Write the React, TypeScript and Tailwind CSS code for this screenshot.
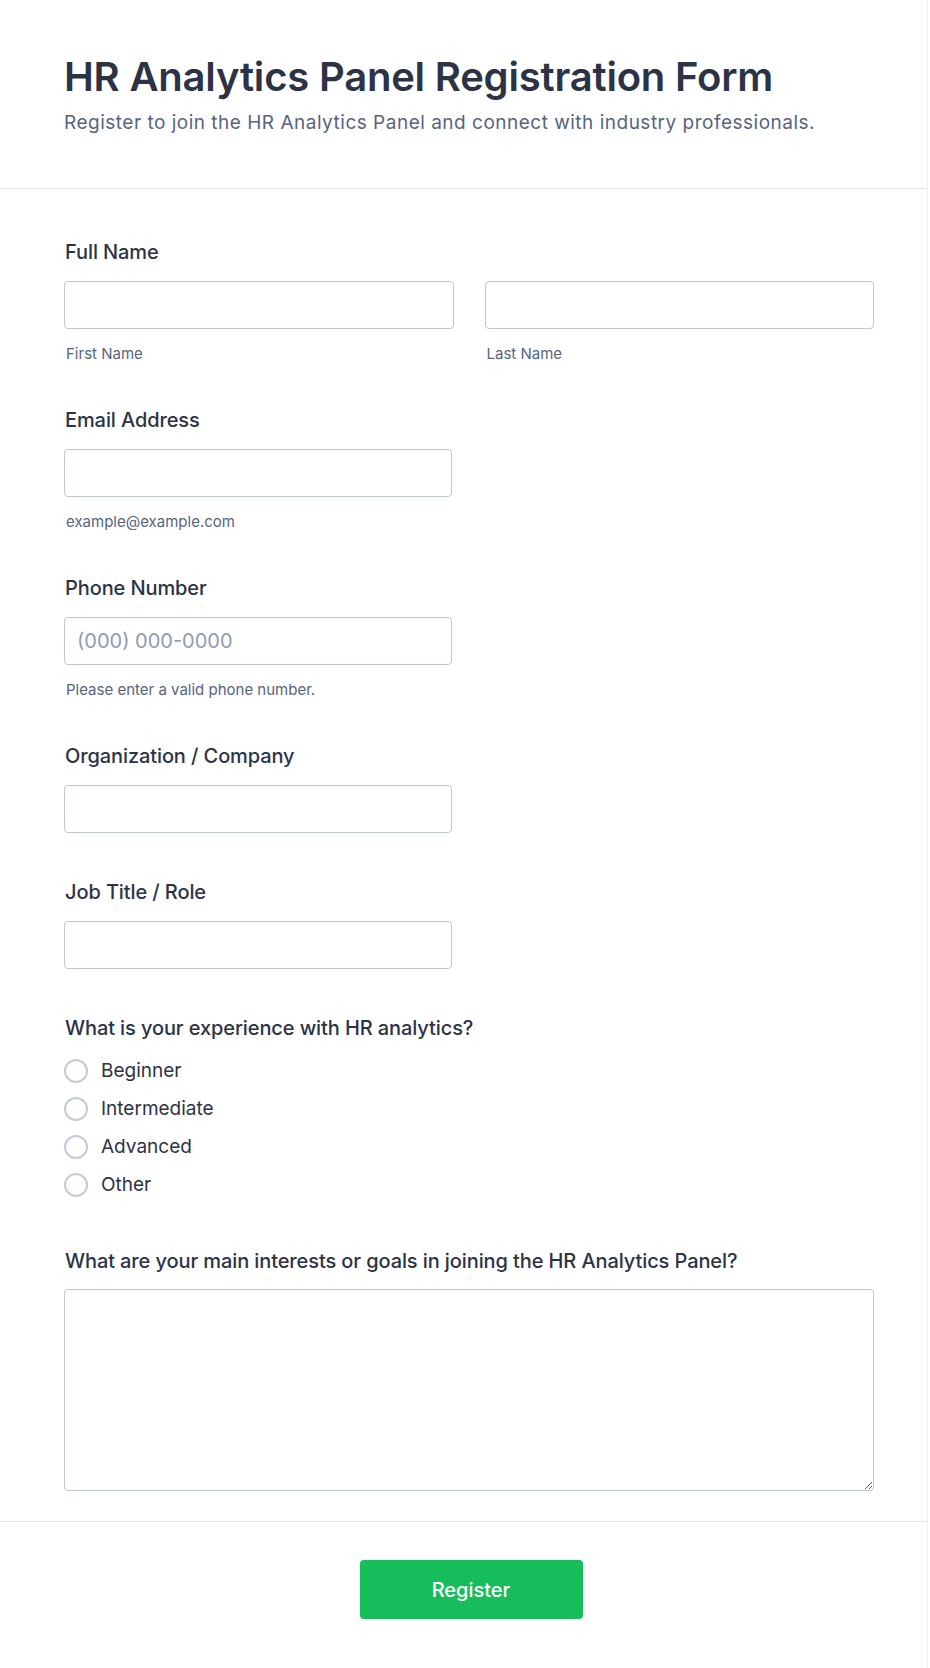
import React from "react";

function Label({ children }: { children: React.ReactNode }) {
  return (
    <div className="pt-[1px] mb-[-1px] text-[20px] leading-[24px] font-medium tracking-[-0.1px] text-[#2c3345] pl-[1px]">
      {children}
    </div>
  );
}

function Sub({ children }: { children: React.ReactNode }) {
  return <div className="mt-[15px] text-[15px] leading-[20px] text-[#57647e] pl-[2px]">{children}</div>;
}

function Input({ placeholder, wide }: { placeholder?: string; wide?: boolean }) {
  return (
    <input
      type="text"
      placeholder={placeholder}
      className={
        "block h-[48px] rounded-[4px] border border-[#bfc5d2] bg-white px-3 text-[20px] text-[#2c3345] placeholder:text-[#8f9bb3] outline-none " +
        (wide ? "w-full" : "w-[388px]")
      }
    />
  );
}

export default function App() {
  const options = ["Beginner", "Intermediate", "Advanced", "Other"];
  return (
    <div className="min-h-[1668px] w-[928px] border-r border-[#eef0f6] bg-white font-['Inter',sans-serif]">
      <header className="border-b border-[#dcdfea] pl-[64px] pr-[55px] pt-[53px] pb-[53px]">
        <h1 className="text-[40px] leading-[48px] font-semibold tracking-[-0.2px] text-[#2c3345]">
          HR Analytics Panel Registration Form
        </h1>
        <p className="mt-[10px] text-[19px] leading-[24px] tracking-[0.5px] text-[#57647e]">
          Register to join the HR Analytics Panel and connect with industry professionals.
        </p>
      </header>

      <form className="border-b border-[#e3e5ef] pl-[64px] pr-[53px] pt-[50px] pb-[30px]">
        <div>
          <Label>Full Name</Label>
          <div className="mt-[18px] grid grid-cols-2 gap-[31px]">
            <div>
              <Input wide />
              <Sub>First Name</Sub>
            </div>
            <div>
              <Input wide />
              <Sub>Last Name</Sub>
            </div>
          </div>
        </div>

        <div className="mt-[43px]">
          <Label>Email Address</Label>
          <div className="mt-[18px]">
            <Input />
          </div>
          <Sub>example@example.com</Sub>
        </div>

        <div className="mt-[43px]">
          <Label>Phone Number</Label>
          <div className="mt-[18px]">
            <Input placeholder="(000) 000-0000" />
          </div>
          <Sub>Please enter a valid phone number.</Sub>
        </div>

        <div className="mt-[43px]">
          <Label>Organization / Company</Label>
          <div className="mt-[18px]">
            <Input />
          </div>
        </div>

        <div className="mt-[46px]">
          <Label>Job Title / Role</Label>
          <div className="mt-[18px]">
            <Input />
          </div>
        </div>

        <div className="mt-[46px]">
          <Label>What is your experience with HR analytics?</Label>
          <div className="mt-[20px] flex flex-col gap-[14px]">
            {options.map((o) => (
              <label key={o} className="flex h-[24px] items-center gap-[13px]">
                <span className="block h-[24px] w-[24px] rounded-full border-2 border-[#c3cad8] bg-white" />
                <span className="text-[19px] leading-[24px] text-[#2c3345]">{o}</span>
              </label>
            ))}
          </div>
        </div>

        <div className="mt-[51px]">
          <Label>What are your main interests or goals in joining the HR Analytics Panel?</Label>
          <textarea className="mt-[17px] block h-[202px] w-full resize-y rounded-[4px] border border-[#bfc5d2] bg-white outline-none" />
        </div>
      </form>

      <div className="flex justify-center pl-[70px] pr-[55px] pt-[38px] pb-[50px]">
        <button
          type="button"
          className="h-[59px] w-[223px] rounded-[4px] bg-[#18bd5b] text-[20px] font-medium text-white"
        >
          Register
        </button>
      </div>
    </div>
  );
}
